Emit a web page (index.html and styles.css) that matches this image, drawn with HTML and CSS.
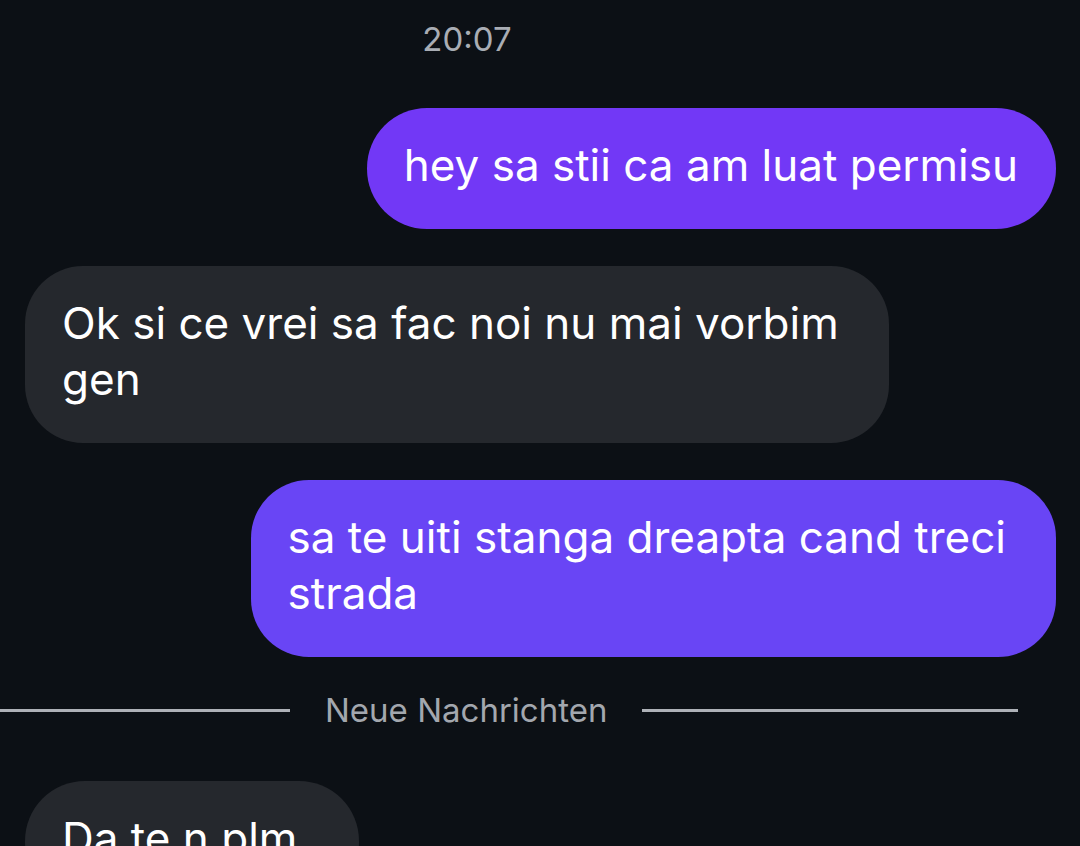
FILE: index.html
```html
<!DOCTYPE html>
<html lang="ro">
<head>
<meta charset="utf-8">
<title>Chat</title>
<link rel="stylesheet" href="styles.css">
</head>
<body>
<main class="chat">
  <div class="stamp">20:07</div>

  <div class="row out">
    <div class="bubble purple-a">hey sa stii ca am luat permisu</div>
  </div>

  <div class="row in">
    <div class="bubble gray multi">Ok si ce vrei sa fac noi nu mai vorbim<br>gen</div>
  </div>

  <div class="row out">
    <div class="bubble purple-b multi">sa te uiti stanga dreapta cand treci<br>strada</div>
  </div>

  <div class="divider">
    <span class="line"></span>
    <span class="divider-label">Neue Nachrichten</span>
    <span class="line"></span>
  </div>

  <div class="row in">
    <div class="bubble gray short">Da te n plm</div>
  </div>
</main>
</body>
</html>
```

FILE: styles.css
```css
html, body {
  margin: 0;
  padding: 0;
  background: #0c1015;
  height: 100%;
  overflow: hidden;
}

body {
  font-family: "Inter", "Liberation Sans", sans-serif;
  color: #ffffff;
}

.chat {
  display: flex;
  flex-direction: column;
  width: 1080px;
}

.stamp {
  width: 934px;
  text-align: center;
  font-size: 33px;
  line-height: 40px;
  color: #a9adb4;
  padding-top: 19px;
  margin-bottom: 49px;
}

.row {
  display: flex;
  padding: 0 24px 0 25px;
  margin-bottom: 37px;
}

.row.out {
  justify-content: flex-end;
}

.row.in {
  justify-content: flex-start;
}

.bubble {
  font-size: 44px;
  line-height: 56px;
  padding: 29px 38px 36px 37px;
  border-radius: 60px;
  white-space: nowrap;
}

.bubble.multi {
  border-radius: 58px;
  padding-right: 50px;
}

.bubble.short {
  padding-right: 62px;
}

.purple-a {
  background: #7238f6;
}

.purple-b {
  background: #6945f5;
}

.gray {
  background: #25282d;
}

.divider {
  display: grid;
  grid-template-columns: 290px auto 1fr;
  column-gap: 35px;
  align-items: center;
  width: 1018px;
  margin-top: -2px;
  margin-bottom: 53px;
}

.line {
  height: 3px;
  background: #aeb1b7;
}

.divider-label {
  font-size: 33px;
  line-height: 36px;
  color: #a3a7ae;
}
```
